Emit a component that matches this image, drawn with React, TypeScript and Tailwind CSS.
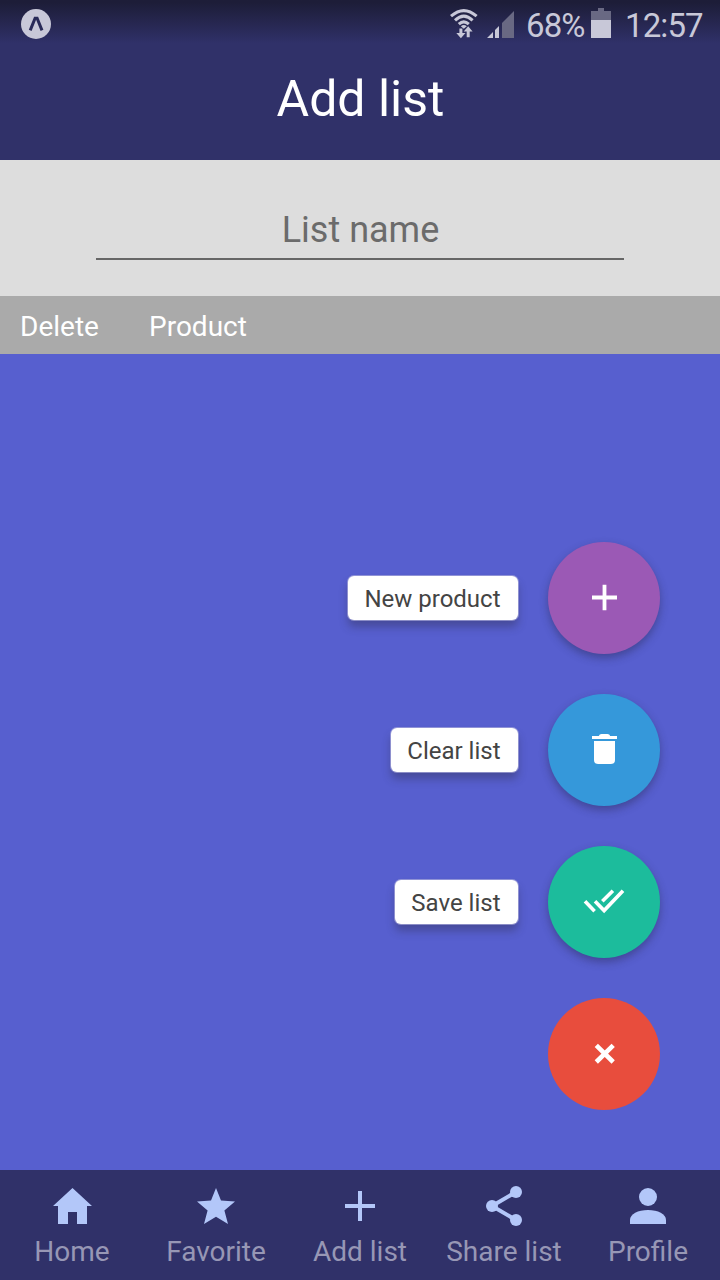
import type { ReactNode } from "react";

const StatusBar = () => (
  <div className="flex h-12 items-center bg-linear-to-b from-[#1d1d38] from-5% to-[#303169] to-90% pl-[21px] pr-4 text-[#c8c8d8]">
    <svg className="h-[30px] w-[30px]" viewBox="0 0 30 30">
      <circle cx="15" cy="15" r="15" fill="#c8c8d8" />
      <path d="M9.2 21.4L14.1 9.2h2L21 21.4" fill="none" stroke="#292a58" strokeWidth="3" />
    </svg>
    <svg className="ml-auto h-8 w-7" viewBox="0 0 28 32">
      <g fill="none" stroke="#c8c8d8" strokeWidth="3">
        <path d="M1 8.2Q13.8-3 26.6 8.2" />
        <path d="M5 12.4Q13.8 4 22.6 12.4" />
        <path d="M8.8 16.2Q13.8 11.4 18.8 16.2" />
      </g>
      <path d="M10.8 18.3q3-2.8 6 0l-3 2.5z" fill="#c8c8d8" />
      <path d="M9.4 20.5h3v4.5h3.1l-4.6 5.2-4.6-5.2h3.1zM16.7 29.2h3v-5.7h2.9L18.2 18.3l-4.5 5.2h3z" fill="#c8c8d8" />
    </svg>
    <svg className="ml-[9px] h-8 w-7" viewBox="0 0 28 32">
      <path d="M0 30l6-6v6zM8 22l4-4v12H8z" fill="#c8c8d8" />
      <path d="M15 15L27 3v27H15z" fill="#696983" />
    </svg>
    <span className="ml-[11px] w-[62px] whitespace-nowrap pt-0.5 text-[33px] leading-none tracking-[-0.9px]">68%</span>
    <svg className="ml-[3px] h-8 w-5" viewBox="0 0 20 32">
      <path d="M7 0h6v3h7v10H0V3h7z" fill="#696983" />
      <path d="M0 12h20v18H0z" fill="#c8c8d8" />
    </svg>
    <span className="ml-[14px] w-[79px] whitespace-nowrap pt-0.5 text-[33px] leading-none tracking-[-0.9px]">12:57</span>
  </div>
);

const Fab = ({ label, color, children }: { label?: string; color: string; children: ReactNode }) => (
  <div className="flex items-center gap-[30.5px]">
    {label && (
      <button className="flex h-11 items-center rounded-[6px] bg-white pl-[16.5px] pr-[17px] pt-0.5 text-2xl text-[#444] shadow-[0_0_0_1px_rgba(176,176,220,0.65),0_7px_8px_rgba(50,50,90,0.45)]">
        {label}
      </button>
    )}
    <button
      aria-label={label ?? "Close"}
      className={`flex h-28 w-28 items-center justify-center rounded-full ${color}`}
    >
      <svg className="h-12 w-12" viewBox="0 0 48 48" fill="none" stroke="white">
        {children}
      </svg>
    </button>
  </div>
);

const Tab = ({ label, children }: { label: string; children: ReactNode }) => (
  <button className="flex flex-1 flex-col items-center pt-3">
    <svg className="h-12 w-12" viewBox="0 0 48 48" fill="#b3c7f9">
      {children}
    </svg>
    <span className="mt-1.5 whitespace-nowrap text-[28px] leading-8 text-[#9797b5]">{label}</span>
  </button>
);

export default function App() {
  return (
    <div className="flex h-[1280px] w-[720px] flex-col overflow-hidden bg-[#575fcf] font-['Roboto',sans-serif]">
      <header className="h-40 bg-[#303169]">
        <StatusBar />
        <h1 className="pl-px pt-[21px] text-center text-[50px] leading-[60px] text-white">Add list</h1>
      </header>
      <section className="h-[136px] bg-[#ddd] px-24 pt-10">
        <div className="h-[60px] border-b-2 border-[#666] pl-px text-center text-[36px] leading-[60px] text-[#6b6b6b]">
          List name
        </div>
      </section>
      <div className="flex h-[58px] items-center bg-[#aaa] pl-5 pt-1 text-[28px] leading-none text-white">
        <span className="w-[129px]">Delete</span>
        <span>Product</span>
      </div>
      <main className="flex flex-1 flex-col items-end gap-10 pr-[60px] pt-[188px]">
        <Fab label="New product" color="bg-[#9b59b5] shadow-[0_4px_9px_rgba(40,40,80,0.45)]">
          <path d="M24.5 10.8v25.4M12 23.5h25" strokeWidth="3.8" />
        </Fab>
        <Fab label="Clear list" color="bg-[#3598da] shadow-[0_4px_9px_rgba(40,40,80,0.45)]">
          <path
            d="M12 10h6.8q.6-2 2.7-2h6q2.1 0 2.7 2H37v3H12zM14 15h21v19q0 4-4 4H18q-4 0-4-4z"
            fill="white"
            stroke="none"
          />
        </Fab>
        <Fab label="Save list" color="bg-[#1cbc9c] shadow-[0_4px_9px_rgba(40,40,80,0.45)]">
          <path d="M5 23.3l9.6 9.9M15 23.3l9.1 9.3L43 12.7M22.3 23.3l10.6-10.6" strokeWidth="3.6" />
        </Fab>
        <Fab color="bg-[#e84d3d]">
          <path d="M16.3 15.3L33.2 32M33.2 15.3L16.3 32" strokeWidth="4.6" />
        </Fab>
      </main>
      <nav className="flex h-[110px] bg-[#303169]">
        <Tab label="Home">
          <path d="M24.5 6L44 24h-5v18h-10V30h-9v12H10V24H5z" />
        </Tab>
        <Tab label="Favorite">
          <path d="M24 6l5 12.4 14 1-10.6 9.2L36 42l-12-7.2L12 42l3.6-13.4L5 19.4l14-1z" />
        </Tab>
        <Tab label="Add list">
          <path d="M22 9h4v13h13v4H26v13h-4V26H9v-4h13z" />
        </Tab>
        <Tab label="Share list">
          <path d="M36 10L12 24l24 14" fill="none" stroke="#b3c7f9" strokeWidth="4" />
          <circle cx="36" cy="10" r="6" />
          <circle cx="12" cy="24" r="6" />
          <circle cx="36" cy="38" r="6" />
        </Tab>
        <Tab label="Profile">
          <circle cx="24" cy="15" r="9" />
          <path d="M6 42v-4c0-6 8-10 18-10s18 4 18 10v4z" />
        </Tab>
      </nav>
    </div>
  );
}
